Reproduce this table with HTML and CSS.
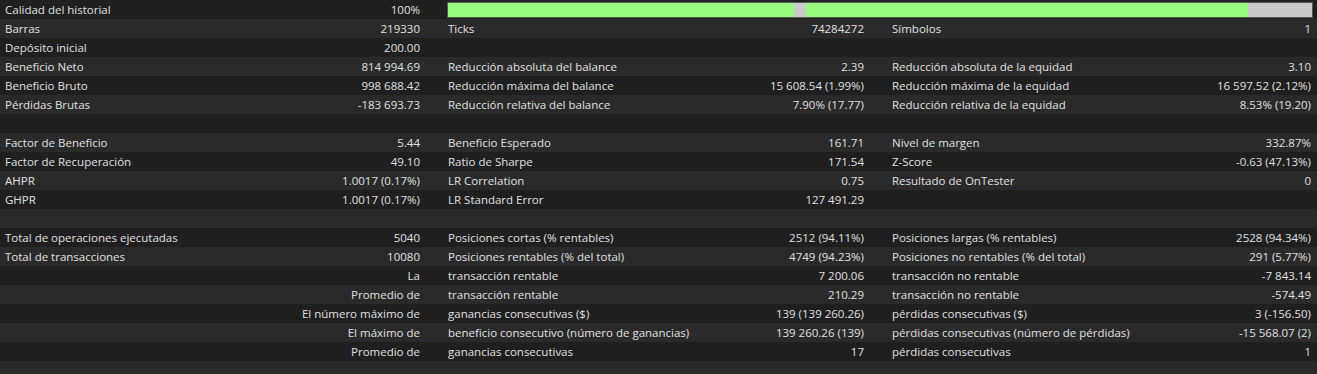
FILE: index.html
```html
<!DOCTYPE html>
<html lang="es">
<head>
<meta charset="utf-8">
<title>Informe</title>
<link rel="stylesheet" href="styles.css">
</head>
<body>
<div class="report">
  <div class="row">
    <div class="cell"><span>Calidad del historial</span><span>100%</span></div>
    <div class="barcell">
      <div class="bar">
        <div class="seg good" style="width:346px"></div>
        <div class="seg miss" style="width:12px"></div>
        <div class="seg good" style="width:442px"></div>
        <div class="seg miss" style="width:64px"></div>
      </div>
    </div>
  </div>
  <div class="row">
    <div class="cell"><span>Barras</span><span>219330</span></div>
    <div class="cell"><span>Ticks</span><span>74284272</span></div>
    <div class="cell last"><span>Símbolos</span><span>1</span></div>
  </div>
  <div class="row">
    <div class="cell"><span>Depósito inicial</span><span>200.00</span></div>
    <div class="cell"></div>
    <div class="cell last"></div>
  </div>
  <div class="row">
    <div class="cell"><span>Beneficio Neto</span><span>814 994.69</span></div>
    <div class="cell"><span>Reducción absoluta del balance</span><span>2.39</span></div>
    <div class="cell last"><span>Reducción absoluta de la equidad</span><span>3.10</span></div>
  </div>
  <div class="row">
    <div class="cell"><span>Beneficio Bruto</span><span>998 688.42</span></div>
    <div class="cell"><span>Reducción máxima del balance</span><span>15 608.54 (1.99%)</span></div>
    <div class="cell last"><span>Reducción máxima de la equidad</span><span>16 597.52 (2.12%)</span></div>
  </div>
  <div class="row">
    <div class="cell"><span>Pérdidas Brutas</span><span>-183 693.73</span></div>
    <div class="cell"><span>Reducción relativa del balance</span><span>7.90% (17.77)</span></div>
    <div class="cell last"><span>Reducción relativa de la equidad</span><span>8.53% (19.20)</span></div>
  </div>
  <div class="row"></div>
  <div class="row">
    <div class="cell"><span>Factor de Beneficio</span><span>5.44</span></div>
    <div class="cell"><span>Beneficio Esperado</span><span>161.71</span></div>
    <div class="cell last"><span>Nivel de margen</span><span>332.87%</span></div>
  </div>
  <div class="row">
    <div class="cell"><span>Factor de Recuperación</span><span>49.10</span></div>
    <div class="cell"><span>Ratio de Sharpe</span><span>171.54</span></div>
    <div class="cell last"><span>Z-Score</span><span>-0.63 (47.13%)</span></div>
  </div>
  <div class="row">
    <div class="cell"><span>AHPR</span><span>1.0017 (0.17%)</span></div>
    <div class="cell"><span>LR Correlation</span><span>0.75</span></div>
    <div class="cell last"><span>Resultado de OnTester</span><span>0</span></div>
  </div>
  <div class="row">
    <div class="cell"><span>GHPR</span><span>1.0017 (0.17%)</span></div>
    <div class="cell"><span>LR Standard Error</span><span>127 491.29</span></div>
    <div class="cell last"></div>
  </div>
  <div class="row"></div>
  <div class="row">
    <div class="cell"><span>Total de operaciones ejecutadas</span><span>5040</span></div>
    <div class="cell"><span>Posiciones cortas (% rentables)</span><span>2512 (94.11%)</span></div>
    <div class="cell last"><span>Posiciones largas (% rentables)</span><span>2528 (94.34%)</span></div>
  </div>
  <div class="row">
    <div class="cell"><span>Total de transacciones</span><span>10080</span></div>
    <div class="cell"><span>Posiciones rentables (% del total)</span><span>4749 (94.23%)</span></div>
    <div class="cell last"><span>Posiciones no rentables (% del total)</span><span>291 (5.77%)</span></div>
  </div>
  <div class="row">
    <div class="cell"><span></span><span>La</span></div>
    <div class="cell"><span>transacción rentable</span><span>7 200.06</span></div>
    <div class="cell last"><span>transacción no rentable</span><span>-7 843.14</span></div>
  </div>
  <div class="row">
    <div class="cell"><span></span><span>Promedio de</span></div>
    <div class="cell"><span>transacción rentable</span><span>210.29</span></div>
    <div class="cell last"><span>transacción no rentable</span><span>-574.49</span></div>
  </div>
  <div class="row">
    <div class="cell"><span></span><span>El número máximo de</span></div>
    <div class="cell"><span>ganancias consecutivas ($)</span><span>139 (139 260.26)</span></div>
    <div class="cell last"><span>pérdidas consecutivas ($)</span><span>3 (-156.50)</span></div>
  </div>
  <div class="row">
    <div class="cell"><span></span><span>El máximo de</span></div>
    <div class="cell"><span>beneficio consecutivo (número de ganancias)</span><span>139 260.26 (139)</span></div>
    <div class="cell last"><span>pérdidas consecutivas (número de pérdidas)</span><span>-15 568.07 (2)</span></div>
  </div>
  <div class="row">
    <div class="cell"><span></span><span>Promedio de</span></div>
    <div class="cell"><span>ganancias consecutivas</span><span>17</span></div>
    <div class="cell last"><span>pérdidas consecutivas</span><span>1</span></div>
  </div>
  <div class="row"></div>
</div>
</body>
</html>
```

FILE: styles.css
```css
html, body {
  margin: 0;
  padding: 0;
  background: #2a2a2a;
}
body {
  width: 1317px;
  height: 374px;
  overflow: hidden;
  font-family: "Open Sans", "Noto Sans", sans-serif;
  font-size: 11.5px;
  color: #e0e0e0;
}
.report {
  display: flex;
  flex-direction: column;
}
.row {
  display: grid;
  grid-template-columns: 443px 444px 1fr;
  height: 19px;
  line-height: 19px;
  background: #1f1f1f;
}
.row:nth-child(even) {
  background: #2a2a2a;
}
.cell {
  display: flex;
  justify-content: space-between;
  padding: 0 23px 0 5px;
  white-space: nowrap;
}
.cell.last {
  padding-right: 6px;
}
.barcell {
  grid-column: 2 / 4;
  padding: 2px 4px 0 4px;
}
.bar {
  display: flex;
  height: 14px;
  border: 1px solid #575757;
}
.seg {
  height: 100%;
}
.seg.good {
  background: #98fb80;
}
.seg.miss {
  background: #cacaca;
}
```
